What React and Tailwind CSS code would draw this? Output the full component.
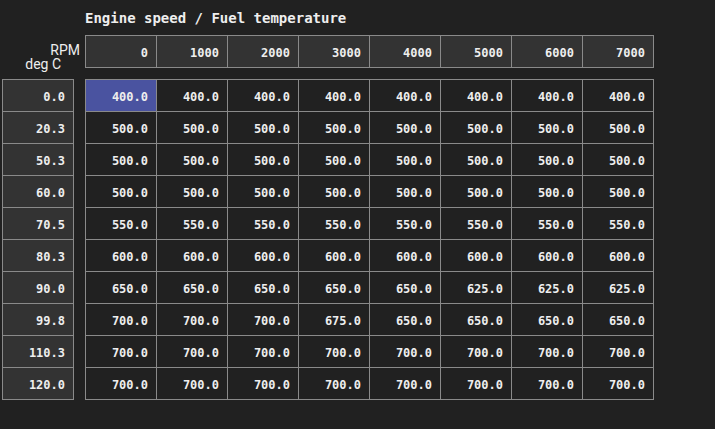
import React from "react";

const rpm = [0, 1000, 2000, 3000, 4000, 5000, 6000, 7000];

const rows = [
  { temp: "0.0", values: [400, 400, 400, 400, 400, 400, 400, 400] },
  { temp: "20.3", values: [500, 500, 500, 500, 500, 500, 500, 500] },
  { temp: "50.3", values: [500, 500, 500, 500, 500, 500, 500, 500] },
  { temp: "60.0", values: [500, 500, 500, 500, 500, 500, 500, 500] },
  { temp: "70.5", values: [550, 550, 550, 550, 550, 550, 550, 550] },
  { temp: "80.3", values: [600, 600, 600, 600, 600, 600, 600, 600] },
  { temp: "90.0", values: [650, 650, 650, 650, 650, 625, 625, 625] },
  { temp: "99.8", values: [700, 700, 700, 675, 650, 650, 650, 650] },
  { temp: "110.3", values: [700, 700, 700, 700, 700, 700, 700, 700] },
  { temp: "120.0", values: [700, 700, 700, 700, 700, 700, 700, 700] },
];

const mono = "font-['DejaVu_Sans_Mono',monospace]";

export default function App() {
  return (
    <div className={`min-h-screen w-full bg-[#212121] text-[#eeeeee] ${mono}`}>
      <div className="pt-[8px] pl-[85px] text-[14px] leading-[20px] font-bold">
        Engine speed / Fuel temperature
      </div>

      <div className="mt-[7px] flex">
        {/* axis labels */}
        <div className="w-[85px] h-[33px] flex flex-col items-end pt-[8px] font-['Roboto',sans-serif] text-[14px] leading-[14px]">
          <span className="mr-[5px]">RPM</span>
          <span className="mr-[24px]">deg C</span>
        </div>

        {/* header row */}
        <div className="flex border-l border-t border-[#8a8a8a]">
          {rpm.map((r) => (
            <div
              key={r}
              className="w-[71px] h-[32px] flex items-center justify-end pr-[8px] pt-[3px] border-r border-b border-[#8a8a8a] bg-[#333333] text-[12px] font-bold"
            >
              {r}
            </div>
          ))}
        </div>
      </div>

      <div className="mt-[11px] flex">
        {/* temperature axis */}
        <div className="ml-[2px] mr-[11px] flex flex-col border-l border-t border-[#8a8a8a]">
          {rows.map((row) => (
            <div
              key={row.temp}
              className="w-[71px] h-[32px] flex items-center justify-end pr-[8px] pt-[3px] border-r border-b border-[#8a8a8a] bg-[#333333] text-[12px] font-bold"
            >
              {row.temp}
            </div>
          ))}
        </div>

        {/* values */}
        <div className="flex flex-col border-l border-t border-[#8a8a8a]">
          {rows.map((row, i) => (
            <div key={row.temp} className="flex">
              {row.values.map((v, j) => (
                <div
                  key={j}
                  className={`w-[71px] h-[32px] flex items-center justify-end pr-[8px] pt-[3px] border-r border-b border-[#8a8a8a] text-[12px] font-bold ${
                    i === 0 && j === 0 ? "bg-[#4a53a0]" : "bg-[#212121]"
                  }`}
                >
                  {v.toFixed(1)}
                </div>
              ))}
            </div>
          ))}
        </div>
      </div>
    </div>
  );
}
